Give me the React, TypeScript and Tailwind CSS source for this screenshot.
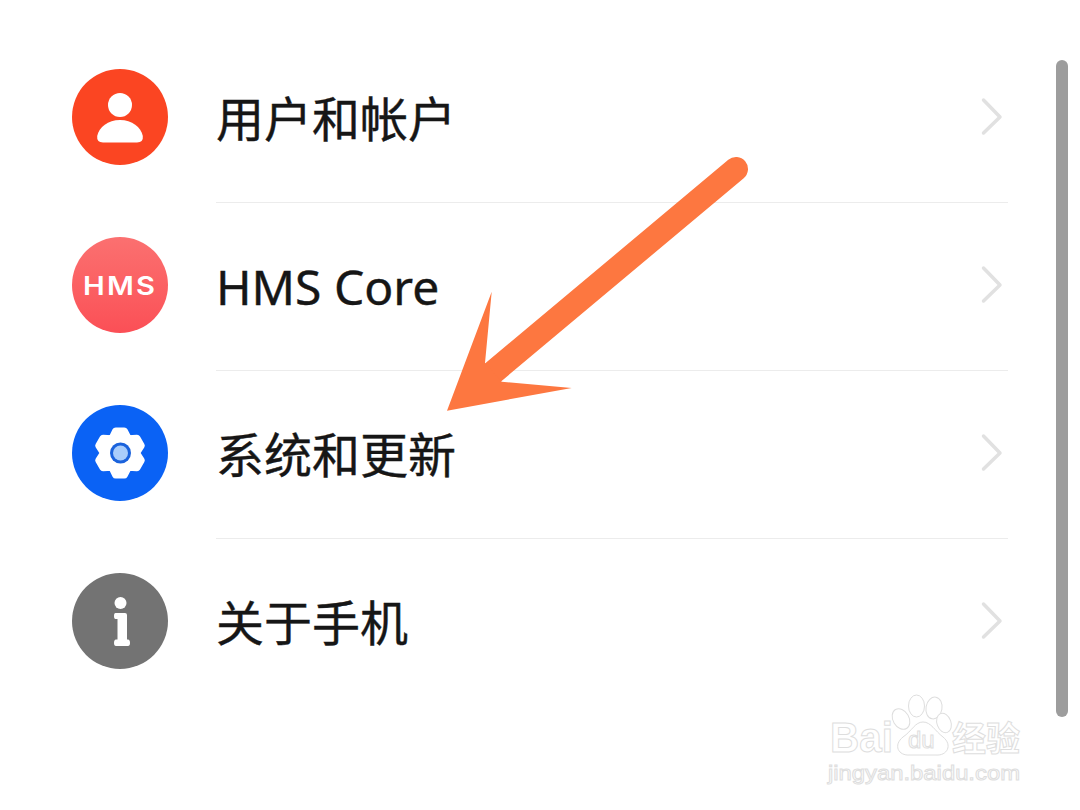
import React from 'react';

const rows = ['用户和帐户', 'HMS Core', '系统和更新', '关于手机'];

// six rounded lobes, flat at top and bottom
const gearPath = () => {
  const pts: string[] = [];
  for (let i = 0; i < 6; i++) {
    const a = (-90 + i * 60) * (Math.PI / 180);
    const d = 11 * (Math.PI / 180);
    const n = 30 * (Math.PI / 180);
    const p = (ang: number, r: number) =>
      `${(48 + r * Math.cos(ang)).toFixed(1)} ${(48 + r * Math.sin(ang)).toFixed(1)}`;
    pts.push(`${i === 0 ? 'M' : 'L'}${p(a - d, 22.5)}`);
    pts.push(`L${p(a + d, 22.5)}`);
    pts.push(`L${p(a + n, 16.5)}`);
  }
  return pts.join(' ') + 'Z';
};

const UserIcon = () => (
  <svg width="96" height="96" viewBox="0 0 96 96" className="shrink-0">
    <circle cx="48" cy="48" r="48" fill="#fb4522" />
    <circle cx="48" cy="36" r="12" fill="#fff" />
    <path d="M31 73.500Q24.500 73.500 25.200 67C27 58 36 51 48 51C60 51 69 58 70.800 67Q71.500 73.500 65 73.500Z" fill="#fff" />
  </svg>
);

const HmsIcon = () => (
  <div className="w-24 h-24 shrink-0 rounded-full bg-gradient-to-b from-[#fb7070] to-[#fb4f56] flex items-center justify-center">
    <span className="text-white font-semibold text-[26px] tracking-[2px] scale-x-[1.12] font-['Inter',sans-serif]">HMS</span>
  </div>
);

const GearIcon = () => (
  <svg width="96" height="96" viewBox="0 0 96 96" className="shrink-0">
    <circle cx="48" cy="48" r="48" fill="#0a62f5" />
    <path d={gearPath()} fill="#fff" stroke="#fff" strokeWidth="7" strokeLinejoin="round" />
    <circle cx="48.500" cy="48" r="10.500" fill="#1a62dc" />
    <circle cx="48.500" cy="48" r="7.500" fill="#a9cdfb" />
  </svg>
);

const InfoIcon = () => (
  <svg width="96" height="96" viewBox="0 0 96 96" className="shrink-0">
    <circle cx="48" cy="48" r="48" fill="#737373" />
    <circle cx="48.500" cy="30" r="6" fill="#fff" />
    <path
      d="M43.500 40H53Q55 40 55 42V66.500H56Q58 66.500 58 70Q58 73 56 73H44Q42 73 42 70Q42 66.500 44 66.500H45.500V46H43.500Q42 46 42 43Q42 40 43.500 40Z"
      fill="#fff"
    />
  </svg>
);

const icons = [UserIcon, HmsIcon, GearIcon, InfoIcon];

const Chevron = () => (
  <svg width="24" height="40" viewBox="0 0 24 40" className="mb-1 shrink-0">
    <path d="M3.500 3L20 20L3.500 36" fill="none" stroke="#e1e1e1" strokeWidth="3.500" strokeLinecap="round" strokeLinejoin="round" />
  </svg>
);

const Row = ({ label, index }: { label: string; index: number }) => {
  const Icon = icons[index];
  return (
    <div className="flex h-[168px] items-center">
      <div className="pb-1 pl-[72px] pr-12">
        <Icon />
      </div>
      <div className={`flex h-full w-[792px] items-center justify-between pr-[4px] ${index < 3 ? 'border-b border-[#ececec]' : ''}`}>
        <span className="text-[48px] font-normal leading-none text-[#161616] [-webkit-text-stroke:0.4px_#161616] font-['Noto_Sans','Noto_Sans_CJK_SC',sans-serif]">{label}</span>
        <Chevron />
      </div>
    </div>
  );
};

export default function App() {
  return (
    <div className="relative h-[810px] w-[1080px] overflow-hidden bg-white">
      <div className="pt-[35px]">
        {rows.map((r, i) => (
          <Row key={r} label={r} index={i} />
        ))}
      </div>

      {/* scrollbar */}
      <div className="absolute left-[1056px] top-[60px] h-[657px] w-3 rounded-full bg-[#9d9d9d]" />

      {/* annotation arrow */}
      <svg className="absolute left-0 top-0" width="1080" height="810" viewBox="0 0 1080 810">
        <path d="M736 169L490 375" stroke="#fd7740" strokeWidth="24" strokeLinecap="round" fill="none" />
        <path d="M491.700 291.700L447 410.700L571.700 388L501.700 381.700L485 363Z" fill="#fd7740" />
      </svg>

      {/* baidu watermark */}
      <svg className="absolute left-0 top-0" width="1080" height="810" viewBox="0 0 1080 810" fill="#fff" stroke="#dedede" strokeWidth="1">
        <ellipse cx="916.500" cy="706" rx="8" ry="11" />
        <ellipse cx="934" cy="708" rx="8" ry="11" transform="rotate(10 934 708)" />
        <ellipse cx="901" cy="719" rx="8" ry="11" transform="rotate(-30 901 719)" />
        <ellipse cx="944" cy="723" rx="7" ry="10" transform="rotate(-20 944 723)" />
        <path d="M923 722C931 722 935 731 943 737C953 745 947 756 936 755H910C898 756 893 745 903 737C912 731 915 722 923 722Z" />
        <text x="830" y="752" fontSize="42" fontWeight="700" fontFamily="'Liberation Sans',sans-serif" textLength="63" lengthAdjust="spacingAndGlyphs">Bai</text>
        <text x="908" y="748" fontSize="24" fontFamily="'Liberation Sans',sans-serif">du</text>
        <text x="952" y="751" fontSize="34" fontWeight="700" fontFamily="'Noto Sans CJK SC',sans-serif">经验</text>
        <text x="828" y="780" fontSize="21" fontFamily="'Liberation Sans',sans-serif" textLength="192" lengthAdjust="spacingAndGlyphs">jingyan.baidu.com</text>
      </svg>
    </div>
  );
}
